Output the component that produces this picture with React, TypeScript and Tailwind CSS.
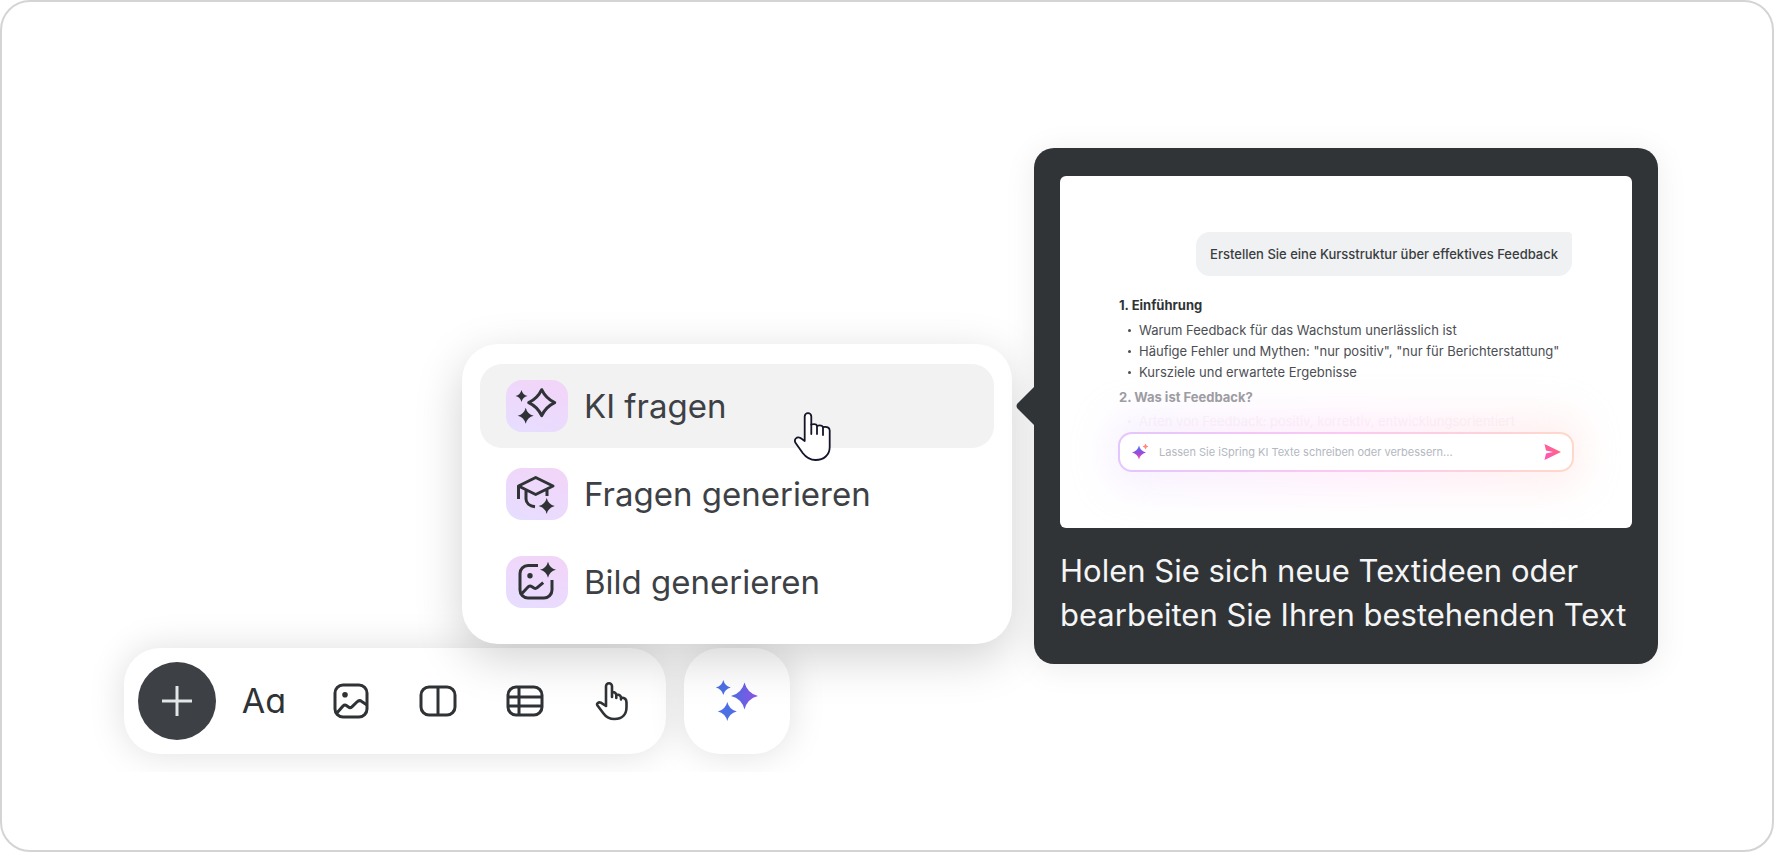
import type { ReactNode } from "react";

// four pointed star with concave sides
function star(cx: number, cy: number, r: number, k = 0.2) {
    const i = r * k;
    return `M${cx} ${cy - r}Q${cx + i} ${cy - i} ${cx + r} ${cy}Q${cx + i} ${cy + i} ${cx} ${cy + r}Q${cx - i} ${cy + i} ${cx - r} ${cy}Q${cx - i} ${cy - i} ${cx} ${cy - r}Z`;
}

function TileIcon({ children }: { children: ReactNode }) {
    return (
        <span className="h-[52px] w-[62px] shrink-0 rounded-2xl bg-linear-20 from-[#e6deff] to-[#f3d4f8]">
            <svg width="62" height="52" viewBox="0 0 62 52" fill="none" stroke="#2f3336" strokeWidth="3" strokeLinejoin="round">
                {children}
            </svg>
        </span>
    );
}

function AskIcon() {
    return (
        <TileIcon>
            <path d={star(35.7, 22.7, 13, 0.32)} />
            <path d={star(15.5, 16, 6)} fill="#2f3336" stroke="none" />
            <path d={star(19.7, 35.7, 8)} fill="#2f3336" stroke="none" />
        </TileIcon>
    );
}

function QuizIcon() {
    return (
        <TileIcon>
            <path d="M12.5 31V18L29.7 9.5 47 18 29.7 26.5 12.5 18M20 22.5V31c0 4 3.5 7 9 7.7M41 22v6" />
            <path d={star(40.7, 38, 8)} fill="#2f3336" stroke="none" />
        </TileIcon>
    );
}

function PictureIcon() {
    return (
        <TileIcon>
            <path d="M32 9.5H22a8 8 0 0 0-8 8V34a8 8 0 0 0 8 8H38a8 8 0 0 0 8-8V24M15 38.5l7-7.5c1-1.2 2.5-1.3 4-.3l2 1.3c1 .6 2.2.5 3.2-.3l6-5" />
            <circle cx="24" cy="19.7" r="2.7" fill="#2f3336" stroke="none" />
            <path d={star(42, 13.7, 8)} fill="#2f3336" stroke="none" />
        </TileIcon>
    );
}

function ToolButton({ label, children }: { label: string; children: ReactNode }) {
    return (
        <button type="button" aria-label={label} className="flex size-[78px] items-center justify-center rounded-full text-[#2f3336]">
            {children}
        </button>
    );
}

function Toolbar() {
    return (
        <div className="mt-1 flex gap-[18px]">
            <div className="flex gap-[9px] rounded-[36px] bg-white py-3.5 pr-[15px] pl-3.5 shadow-[0_0_36px_rgba(0,0,0,0.13)]">
                <button type="button" aria-label="Hinzufügen" className="flex size-[78px] items-center justify-center rounded-full bg-[#3d4145]">
                    <svg width="30" height="30" viewBox="0 0 30 30" fill="none" stroke="#e4e5e5" strokeWidth="3">
                        <path d="M15 0v30M0 15h30" />
                    </svg>
                </button>
                <ToolButton label="Text">
                    <span className="text-[34px] leading-10 [font-feature-settings:'cv11']">Aa</span>
                </ToolButton>
                <ToolButton label="Bild">
                    <svg width="36" height="36" viewBox="0 0 36 36" fill="none" stroke="currentColor" strokeWidth="3" strokeLinejoin="round">
                        <rect x="2" y="2" width="32" height="32" rx="8" />
                        <path d="M3 31l7-8c1-1 2.5-1.2 3.7-.3l1.8 1.3c1 .8 2.4.7 3.4-.2l5-4.800c1.5-1.5 3.2-1.8 4.8-.6L34 22" />
                        <circle cx="12" cy="11.7" r="2.8" fill="currentColor" stroke="none" />
                    </svg>
                </ToolButton>
                <ToolButton label="Spalten">
                    <svg width="38" height="32" viewBox="0 0 38 32" fill="none" stroke="currentColor" strokeWidth="3">
                        <rect x="2" y="2" width="34" height="28" rx="8" />
                        <path d="M19 2v28" />
                    </svg>
                </ToolButton>
                <ToolButton label="Tabelle">
                    <svg width="38" height="32" viewBox="0 0 38 32" fill="none" stroke="currentColor" strokeWidth="3">
                        <rect x="2" y="2" width="34" height="28" rx="8" />
                        <path d="M2 12h34M2 21h34M13 2v28" />
                    </svg>
                </ToolButton>
                <ToolButton label="Interaktion">
                    <svg width="34" height="40" viewBox="0 0 34 40" fill="none" stroke="currentColor" strokeWidth="2.6" strokeLinejoin="round" strokeLinecap="round">
                        <path d="M11 25V5.2a3 3 0 0 1 6 0V16M17 11c2.5 0 4.3 1.300 4.300 3.500V17M21.3 13.5c2.7 0 4.7 1.3 4.7 3.5v1.5M26 16.5c3.7 0 5.5 2 5.5 5v4.500c0 7.500-4.500 12-12 12-5 0-8.500-2-11-5.500L2.500 24.500c-1.300-2 1.200-3.800 3.300-2.800L11 25" />
                    </svg>
                </ToolButton>
            </div>
            <button type="button" aria-label="KI" className="flex size-[106px] items-center justify-center rounded-[36px] bg-white shadow-[0_0_36px_rgba(0,0,0,0.13)]">
                <svg width="44" height="44" viewBox="0 0 44 44" fill="url(#ai)">
                    <defs>
                        <linearGradient id="ai" x1="4" y1="8" x2="44" y2="8" gradientUnits="userSpaceOnUse">
                            <stop offset="0.3" stopColor="#4c6fe4" />
                            <stop offset="1" stopColor="#9151e6" />
                        </linearGradient>
                    </defs>
                    <path d={`${star(8.3, 8.5, 7.5)}${star(29.5, 17, 13.5)}${star(12.3, 32.5, 9.5)}`} />
                </svg>
            </button>
        </div>
    );
}

function Cursor() {
    return (
        <svg className="absolute top-12 left-[314px]" width="38" height="50" viewBox="0 0 38 50" fill="white" stroke="#14142b" strokeWidth="1.8" strokeLinejoin="round" strokeLinecap="round">
            <path d="M10.7 29V4.5a3.3 3.3 0 0 1 6.6 0V12.5c3-.8 5.2-.3 5.7 1.3 3-.7 5.3-.2 6 1.4 4-.8 6.7.3 6.7 3.3V35c0 8-6 13-14 13-6 0-10-3-13-7L2 31.5c-3-4 1-7.5 4.5-5.5z" />
            <path d="M17.3 12.5V22M23 14v8M29 15v8" fill="none" />
        </svg>
    );
}

function Menu() {
    return (
        <ul className="relative z-10 flex w-[550px] flex-col gap-1 self-end rounded-[36px] bg-white px-[18px] py-5 text-[33px] leading-10 text-[#3d4145] shadow-[0_14px_48px_rgba(0,0,0,0.18)]">
            <li className="relative">
                <button type="button" className="flex h-[84px] w-full items-center gap-4 rounded-[22px] bg-[#f2f2f2] px-[26px]">
                    <AskIcon />
                    KI fragen
                </button>
                <Cursor />
            </li>
            <li>
                <button type="button" className="flex h-[84px] w-full items-center gap-4 px-[26px]">
                    <QuizIcon />
                    Fragen generieren
                </button>
            </li>
            <li>
                <button type="button" className="flex h-[84px] w-full items-center gap-4 px-[26px]">
                    <PictureIcon />
                    Bild generieren
                </button>
            </li>
        </ul>
    );
}

function Point({ children }: { children: ReactNode }) {
    return (
        <li className="flex items-center gap-2 whitespace-nowrap before:size-[3px] before:rounded-full before:bg-current before:content-['']">
            {children}
        </li>
    );
}

function Preview() {
    return (
        <div className="h-[352px] overflow-hidden rounded-md bg-white px-[58px] pt-14 text-[13px] text-[#4b4e52]">
            <div className="flex justify-end pr-0.5">
                <p className="rounded-[14px] rounded-tr-sm bg-[#f0f1f3] px-3.5 leading-11 font-medium text-[#3a3d40]">
                    Erstellen Sie eine Kursstruktur über effektives Feedback
                </p>
            </div>
            <h3 className="mt-[19px] pl-px leading-5 font-bold text-[#2f3336]">1. Einführung</h3>
            <ul className="mt-[5px] pl-2.5 leading-[21px]">
                <Point>Warum Feedback für das Wachstum unerlässlich ist</Point>
                <Point>Häufige Fehler und Mythen: "nur positiv", "nur für Berichterstattung"</Point>
                <Point>Kursziele und erwartete Ergebnisse</Point>
            </ul>
            <h3 className="mt-1 pl-px leading-5 font-bold text-[#9a9b9e]">2. Was ist Feedback?</h3>
            <ul className="mt-1 pl-2.5 leading-[21px] text-[#faf4fa]">
                <Point>Arten von Feedback: positiv, korrektiv, entwicklungsorientiert</Point>
            </ul>
            <div className="relative">
                <div className="absolute -inset-x-2 -inset-y-4 rounded-[18px] bg-linear-to-r from-[#dcc6ff] via-[#ffb8f0] to-[#ffc4bc] opacity-25 blur-[20px]"></div>
                <form className="relative rounded-[14px] bg-linear-to-r from-[#e3c6fd] via-[#fdc8f2] to-[#ffd8ca] p-0.5">
                    <div className="flex h-9 items-center rounded-xl bg-white pr-[11px] pl-3">
                        <svg width="18" height="18" viewBox="0 0 18 18">
                            <defs>
                                <linearGradient id="spark" x1="0" y1="0" x2="0" y2="1">
                                    <stop offset="0.2" stopColor="#5b6cf5" />
                                    <stop offset="0.55" stopColor="#a048d8" />
                                    <stop offset="1" stopColor="#f25a9c" />
                                </linearGradient>
                            </defs>
                            <path d={star(7, 9.5, 7)} fill="url(#spark)" />
                            <path d={star(13.5, 3.5, 3)} fill="#ff8a80" />
                        </svg>
                        <input aria-label="Nachricht" placeholder="Lassen Sie iSpring KI Texte schreiben oder verbessern..." className="ml-[9px] min-w-0 flex-1 text-[11px] outline-none placeholder:text-[#b3b8bf]" />
                        <button type="submit" aria-label="Senden">
                            <svg width="18" height="18" viewBox="0 0 18 18">
                                <defs>
                                    <linearGradient id="send" x1="0" y1="1" x2="1" y2="0">
                                        <stop offset="0" stopColor="#ff4fc4" />
                                        <stop offset="1" stopColor="#ff6f70" />
                                    </linearGradient>
                                </defs>
                                <path d="M1.500 1L18 9 1.500 17 3 10.500 10 9 3 7.500z" fill="url(#send)" />
                            </svg>
                        </button>
                    </div>
                </form>
            </div>
        </div>
    );
}

function Tooltip() {
    return (
        <div role="tooltip" className="relative z-20 w-[624px] shrink-0 rounded-[20px] bg-[#303437] px-[26px] pt-7 pb-[27px] shadow-[0_4px_32px_rgba(0,0,0,0.08)]">
            <svg className="absolute top-[238px] -left-[18px]" width="19" height="40" viewBox="0 0 19 40" fill="#303437">
                <path d="M19 0V40L1.500 22.500Q-.5 20 1.500 17.500z" />
            </svg>
            <Preview />
            <p className="mt-[21px] text-[31px] leading-11 whitespace-nowrap text-[#f5f5f5]">
                Holen Sie sich neue Textideen oder
                <br />
                bearbeiten Sie Ihren bestehenden Text
            </p>
        </div>
    );
}

export default function App() {
    return (
        <main className="flex min-h-screen items-start justify-center gap-[22px] rounded-[30px] border-2 border-[#d4d4d4] bg-white pt-[146px] pl-2 font-[Inter,sans-serif]">
            <div className="flex w-[888px] flex-col pt-[196px] [clip-path:inset(-100px_-100px_-18px_-100px)]">
                <Menu />
                <Toolbar />
            </div>
            <Tooltip />
        </main>
    );
}
